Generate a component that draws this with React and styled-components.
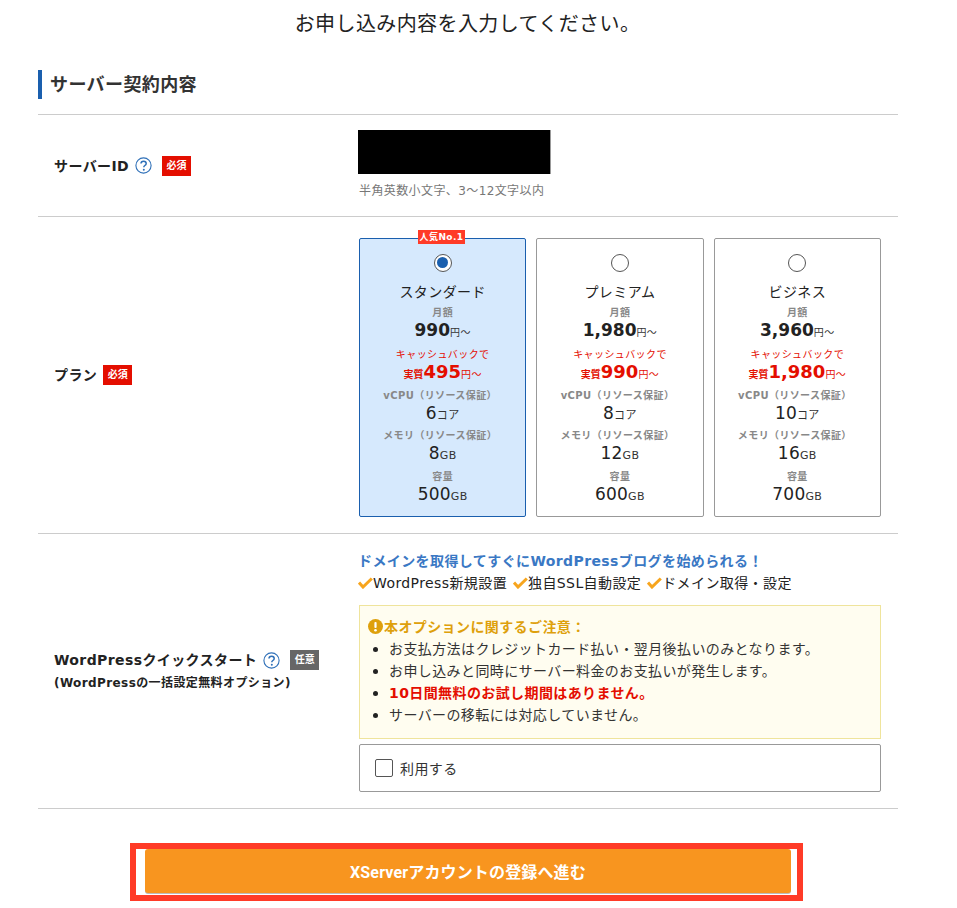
import React from "react";
import styled, { createGlobalStyle } from "styled-components";

const Global = createGlobalStyle`
  html, body { margin: 0; padding: 0; background: #fff; }
  body { font-family: "DejaVu Sans", "Noto Sans CJK JP", sans-serif; color: #222; letter-spacing: 0.4px; }
  ul { margin: 0; padding: 0; }
`;

const Page = styled.div`
  width: 957px;
  height: 908px;
  overflow: hidden;
`;
const Title = styled.h1`
  margin: 0;
  padding-top: 10px;
  width: 935px;
  text-align: center;
  font-size: 20px;
  line-height: 28px;
  font-weight: 400;
  color: #222;
`;
const Main = styled.main`
  width: 860px;
  margin: 32px 0 0 38px;
`;
const SectionHead = styled.h2`
  margin: 0 0 15px;
  height: 29px;
  border-left: 4px solid #1a5fae;
  padding-left: 8px;
  font-size: 18px;
  line-height: 29px;
  font-weight: 700;
  color: #333;
`;
const Row = styled.section`
  display: flex;
  align-items: center;
  border-top: 1px solid #ccc;
  height: ${(p) => p.$h}px;
  box-sizing: border-box;
  &:last-of-type { border-bottom: 1px solid #ccc; }
`;
const LabelCell = styled.div`
  width: 320px;
  padding-left: 16px;
  box-sizing: border-box;
  flex: none;
`;
const Label = styled.div`
  display: flex;
  align-items: center;
  font-size: 14px;
  line-height: 20px;
  font-weight: 700;
  color: #222;
`;
const SubLabel = styled.div`
  font-size: 12px;
  line-height: 18px;
  font-weight: 700;
  color: #222;
  margin-top: 4px;
`;
const Badge = styled.span`
  display: inline-flex;
  align-items: center;
  justify-content: center;
  width: 29px;
  height: 20px;
  margin-left: ${(p) => p.$ml || 10}px;
  background: ${(p) => (p.$optional ? "#666" : "#e40e00")};
  color: #fff;
  font-size: 10px;
  font-weight: 700;
  letter-spacing: 0;
`;
const HelpIcon = styled.svg`
  width: 17px;
  height: 17px;
  margin-left: 6px;
  flex: none;
`;
const ValueCell = styled.div`
  flex: 1;
  padding-right: 17px;
  min-width: 0;
`;
const Redacted = styled.div`
  width: 192px;
  height: 44px;
  background: #000;
  box-shadow: 1px 0 0 #999;
`;
const Hint = styled.div`
  margin: 8px 0 1px;
  padding-left: 1px;
  font-size: 12px;
  line-height: 18px;
  color: #777;
`;
const Cards = styled.div`
  display: flex;
  gap: 10px;
  margin: 4px 0 0 1px;
`;
const Card = styled.div`
  position: relative;
  flex: 1;
  height: 279px;
  box-sizing: border-box;
  border: 1px solid ${(p) => (p.$active ? "#1a5fae" : "#999")};
  border-radius: 2px;
  background: ${(p) => (p.$active ? "#d6e9fd" : "#fff")};
  padding-top: 15px;
  text-align: center;
`;
const Ribbon = styled.span`
  position: absolute;
  top: -9px;
  left: 58px;
  width: 47px;
  height: 14px;
  background: #ff3b27;
  color: #fff;
  font-size: 9px;
  font-weight: 700;
  line-height: 14px;
`;
const Radio = styled.span`
  display: block;
  width: 18px;
  height: 18px;
  margin: 0 auto;
  box-sizing: border-box;
  border: 1px solid #555;
  border-radius: 50%;
  background: #fff;
  padding: 2.5px;
  &::after {
    content: "";
    display: ${(p) => (p.$on ? "block" : "none")};
    width: 11px;
    height: 11px;
    border-radius: 50%;
    background: #1a5fae;
  }
`;
const PlanName = styled.div`
  margin-top: 10px;
  font-size: 14px;
  line-height: 20px;
  color: #222;
`;
const Caption = styled.div`
  font-size: 10px;
  line-height: 14px;
  font-weight: 700;
  color: #888;
  margin-top: ${(p) => p.$mt || 0}px;
  padding-right: ${(p) => p.$inset || 0}px;
`;
const Price = styled.div`
  font-size: 17px;
  line-height: 20px;
  font-weight: 700;
  letter-spacing: 0;
  color: #222;
`;
const Unit = styled.span`
  font-size: ${(p) => p.$s || 10}px;
  line-height: 1;
  font-weight: 400;
  letter-spacing: 0.4px;
  color: ${(p) => p.$c || "#333"};
`;
const CashNote = styled.div`
  margin-top: 8px;
  font-size: 10px;
  line-height: 14px;
  color: #e40e00;
`;
const CashPrice = styled.div`
  font-size: 18px;
  line-height: 20px;
  font-weight: 700;
  letter-spacing: 0;
  color: #e40e00;
`;
const CashPrefix = styled.span`
  font-size: 10px;
  line-height: 1;
  font-weight: 700;
`;
const Spec = styled.div`
  margin-top: -1px;
  font-size: 17px;
  line-height: 22px;
  letter-spacing: 0.2px;
  color: #222;
`;
const Promo = styled.div`
  font-size: 14px;
  line-height: 20px;
  font-weight: 700;
  color: #3a78c4;
`;
const Checks = styled.div`
  display: flex;
  gap: 6px;
  font-size: 14px;
  line-height: 22px;
  color: #222;
  margin-top: 1px;
`;
const CheckItem = styled.span`
  display: inline-flex;
  align-items: center;
  white-space: nowrap;
`;
const Notice = styled.div`
  margin: 11px 0 5px 1px;
  height: 134px;
  box-sizing: border-box;
  border: 1px solid #efe49c;
  background: #fffdf0;
  padding: 11px 8px 0;
`;
const NoticeHead = styled.div`
  display: flex;
  align-items: center;
  font-size: 14px;
  line-height: 20px;
  font-weight: 700;
  color: #dea00c;
`;
const Bullets = styled.ul`
  list-style: none;
  padding-top: 1px;
`;
const Bullet = styled.li`
  position: relative;
  padding-left: 21px;
  font-size: 14px;
  line-height: 22.3px;
  font-weight: ${(p) => (p.$alert ? 700 : 400)};
  color: ${(p) => (p.$alert ? "#e40e00" : "#333")};
  &::before {
    content: "";
    position: absolute;
    left: 5px;
    top: 9px;
    width: 5px;
    height: 5px;
    border-radius: 50%;
    background: #222;
  }
`;
const UseBox = styled.label`
  display: flex;
  align-items: center;
  margin-left: 1px;
  height: 48px;
  box-sizing: border-box;
  border: 1px solid #999;
  border-radius: 2px;
  padding-left: 15px;
  font-size: 14px;
  color: #333;
`;
const CheckBox = styled.span`
  width: 18px;
  height: 18px;
  box-sizing: border-box;
  border: 1px solid #555;
  border-radius: 2px;
  background: #fff;
  margin-right: 7px;
`;
const ButtonWrap = styled.div`
  width: 673px;
  height: 58px;
  margin: 34px 0 0 92px;
  box-sizing: border-box;
  border: 6px solid #ff3b27;
  background: #fff;
  padding: 0 6px 0 9px;
`;
const Submit = styled.button`
  display: block;
  width: 100%;
  height: 44px;
  border: 0;
  border-radius: 3px;
  background: #f8951f;
  box-shadow: 0 1px 0 #bbb;
  color: #fff;
  font-family: "Roboto", "Noto Sans CJK JP", sans-serif;
  font-size: 16px;
  font-weight: 700;
  letter-spacing: 0.15px;
`;

const Help = () => (
  <HelpIcon viewBox="0 0 17 17">
    <circle cx="8.5" cy="8.5" r="7.6" fill="#fff" stroke="#2f70b8" strokeWidth="1.1" />
    <path d="M6 6.6c0-1.5 1.1-2.4 2.6-2.4S11.2 5.1 11.2 6.5c0 1-.6 1.5-1.3 2-.7.5-1.1.9-1.1 1.8" fill="none" stroke="#2f70b8" strokeWidth="1.5" />
    <circle cx="8.8" cy="12.8" r="1" fill="#2f70b8" />
  </HelpIcon>
);

const Check = () => (
  <svg width="15" height="12" viewBox="0 0 15 12" style={{ flex: "none" }}>
    <path d="M1 5.5l4 4.5 8.8-8.5" fill="none" stroke="#f7a51e" strokeWidth="3" />
  </svg>
);

const Alert = () => (
  <svg width="15" height="15" viewBox="0 0 15 15" style={{ flex: "none", marginRight: 1 }}>
    <circle cx="7.5" cy="7.5" r="7.5" fill="#dea00c" />
    <rect x="6.4" y="3" width="2.2" height="6" rx="1" fill="#fff" />
    <circle cx="7.5" cy="11.3" r="1.3" fill="#fff" />
  </svg>
);

const plans = [
  { name: "スタンダード", price: "990", cash: "495", cpu: "6", mem: "8", disk: "500", on: true },
  { name: "プレミアム", price: "1,980", cash: "990", cpu: "8", mem: "12", disk: "600" },
  { name: "ビジネス", price: "3,960", cash: "1,980", cpu: "10", mem: "16", disk: "700" },
];

export default function App() {
  return (
    <Page>
      <Global />
      <Title>お申し込み内容を入力してください。</Title>
      <Main>
        <SectionHead>サーバー契約内容</SectionHead>
        <Row $h={102}>
          <LabelCell>
            <Label>サーバーID<Help /><Badge>必須</Badge></Label>
          </LabelCell>
          <ValueCell>
            <Redacted />
            <Hint>半角英数小文字、3〜12文字以内</Hint>
          </ValueCell>
        </Row>
        <Row $h={317}>
          <LabelCell>
            <Label>プラン<Badge $ml={6}>必須</Badge></Label>
          </LabelCell>
          <ValueCell>
            <Cards>
              {plans.map((p) => (
                <Card key={p.name} $active={p.on}>
                  {p.on && <Ribbon>人気No.1</Ribbon>}
                  <Radio $on={p.on} />
                  <PlanName>{p.name}</PlanName>
                  <Caption $mt={4}>月額</Caption>
                  <Price>{p.price}<Unit>円〜</Unit></Price>
                  <CashNote>キャッシュバックで</CashNote>
                  <CashPrice>
                    <CashPrefix>実質</CashPrefix>{p.cash}<Unit $c="#e40e00">円〜</Unit>
                  </CashPrice>
                  <Caption $mt={7} $inset={5}>vCPU（リソース保証）</Caption>
                  <Spec>{p.cpu}<Unit $s={11}>コア</Unit></Spec>
                  <Caption $mt={5} $inset={5}>メモリ（リソース保証）</Caption>
                  <Spec>{p.mem}<Unit $s={11}>GB</Unit></Spec>
                  <Caption $mt={6}>容量</Caption>
                  <Spec>{p.disk}<Unit $s={11}>GB</Unit></Spec>
                </Card>
              ))}
            </Cards>
          </ValueCell>
        </Row>
        <Row $h={276}>
          <LabelCell>
            <Label>WordPressクイックスタート<Help /><Badge $optional>任意</Badge></Label>
            <SubLabel>(WordPressの一括設定無料オプション)</SubLabel>
          </LabelCell>
          <ValueCell>
            <Promo>ドメインを取得してすぐにWordPressブログを始められる！</Promo>
            <Checks>
              <CheckItem><Check />WordPress新規設置</CheckItem>
              <CheckItem><Check />独自SSL自動設定</CheckItem>
              <CheckItem><Check />ドメイン取得・設定</CheckItem>
            </Checks>
            <Notice>
              <NoticeHead><Alert />本オプションに関するご注意：</NoticeHead>
              <Bullets>
                <Bullet>お支払方法はクレジットカード払い・翌月後払いのみとなります。</Bullet>
                <Bullet>お申し込みと同時にサーバー料金のお支払いが発生します。</Bullet>
                <Bullet $alert>10日間無料のお試し期間はありません。</Bullet>
                <Bullet>サーバーの移転には対応していません。</Bullet>
              </Bullets>
            </Notice>
            <UseBox><CheckBox />利用する</UseBox>
          </ValueCell>
        </Row>
        <ButtonWrap>
          <Submit>XServerアカウントの登録へ進む</Submit>
        </ButtonWrap>
      </Main>
    </Page>
  );
}
